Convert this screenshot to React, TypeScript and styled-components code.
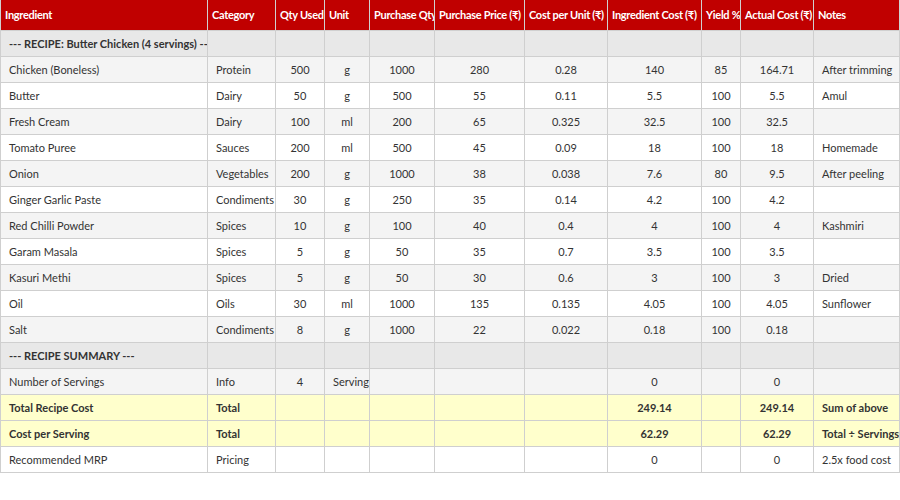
import styled, { createGlobalStyle } from 'styled-components'

const Global = createGlobalStyle`
  body { margin: 0; background: #fff; font-family: Lato, "Open Sans", sans-serif; }
  *, *::before, *::after { box-sizing: border-box; }
`

const Table = styled.table`
  border-collapse: collapse;
  table-layout: fixed;
  width: 899px;
  font-size: 11px;
  color: #333;
`

const Head = styled.th<{ $w: number }>`
  width: ${(p) => p.$w}px;
  height: 30px;
  background: #c00000;
  color: #fff;
  font-weight: 700;
  text-align: left;
  padding: 0 4px;
  letter-spacing: -0.3px;
  border: 1px solid #d0d0d0;
  border-top: none;
  white-space: nowrap;
  overflow: hidden;
`

const Row = styled.tr<{ $bg: string; $bold?: boolean }>`
  height: 26px;
  background: ${(p) => p.$bg};
  font-weight: ${(p) => (p.$bold ? 700 : 400)};
`

const Cell = styled.td<{ $center?: boolean }>`
  border: 1px solid #cfcfcf;
  padding: 0 8px;
  text-align: ${(p) => (p.$center ? 'center' : 'left')};
  white-space: nowrap;
  overflow: hidden;
`

const cols: [string, number][] = [
  ['Ingredient', 207], ['Category', 68], ['Qty Used', 49], ['Unit', 45],
  ['Purchase Qty', 65], ['Purchase Price (₹)', 90], ['Cost per Unit (₹)', 83],
  ['Ingredient Cost (₹)', 94], ['Yield %', 39], ['Actual Cost (₹)', 73], ['Notes', 86],
]

type R = { cells: string[]; bg: string; bold?: boolean }

const items: string[][] = [
  ['Chicken (Boneless)', 'Protein', '500', 'g', '1000', '280', '0.28', '140', '85', '164.71', 'After trimming'],
  ['Butter', 'Dairy', '50', 'g', '500', '55', '0.11', '5.5', '100', '5.5', 'Amul'],
  ['Fresh Cream', 'Dairy', '100', 'ml', '200', '65', '0.325', '32.5', '100', '32.5', ''],
  ['Tomato Puree', 'Sauces', '200', 'ml', '500', '45', '0.09', '18', '100', '18', 'Homemade'],
  ['Onion', 'Vegetables', '200', 'g', '1000', '38', '0.038', '7.6', '80', '9.5', 'After peeling'],
  ['Ginger Garlic Paste', 'Condiments', '30', 'g', '250', '35', '0.14', '4.2', '100', '4.2', ''],
  ['Red Chilli Powder', 'Spices', '10', 'g', '100', '40', '0.4', '4', '100', '4', 'Kashmiri'],
  ['Garam Masala', 'Spices', '5', 'g', '50', '35', '0.7', '3.5', '100', '3.5', ''],
  ['Kasuri Methi', 'Spices', '5', 'g', '50', '30', '0.6', '3', '100', '3', 'Dried'],
  ['Oil', 'Oils', '30', 'ml', '1000', '135', '0.135', '4.05', '100', '4.05', 'Sunflower'],
  ['Salt', 'Condiments', '8', 'g', '1000', '22', '0.022', '0.18', '100', '0.18', ''],
]

const blank = (first: string) => [first, '', '', '', '', '', '', '', '', '', '']

const rows: R[] = [
  { cells: blank('--- RECIPE: Butter Chicken (4 servings) ---'), bg: '#e8e8e8', bold: true },
  ...items.map((c, i) => ({ cells: c, bg: i % 2 === 0 ? '#f4f4f4' : '#fff' })),
  { cells: blank('--- RECIPE SUMMARY ---'), bg: '#e8e8e8', bold: true },
  { cells: ['Number of Servings', 'Info', '4', 'Servings', '', '', '', '0', '', '0', ''], bg: '#f4f4f4' },
  { cells: ['Total Recipe Cost', 'Total', '', '', '', '', '', '249.14', '', '249.14', 'Sum of above'], bg: '#ffffcc', bold: true },
  { cells: ['Cost per Serving', 'Total', '', '', '', '', '', '62.29', '', '62.29', 'Total ÷ Servings'], bg: '#ffffcc', bold: true },
  { cells: ['Recommended MRP', 'Pricing', '', '', '', '', '', '0', '', '0', '2.5x food cost'], bg: '#fff' },
]

export default function App() {
  return (
    <>
      <Global />
      <Table>
        <thead>
          <tr>
            {cols.map(([n, w]) => (
              <Head key={n} $w={w}>{n}</Head>
            ))}
          </tr>
        </thead>
        <tbody>
          {rows.map((r, i) => (
            <Row key={i} $bg={r.bg} $bold={r.bold}>
              {r.cells.map((c, j) => (
                <Cell key={j} $center={j >= 2 && j <= 9 && !(j === 3 && c === 'Servings')}>
                  {c}
                </Cell>
              ))}
            </Row>
          ))}
        </tbody>
      </Table>
    </>
  )
}
